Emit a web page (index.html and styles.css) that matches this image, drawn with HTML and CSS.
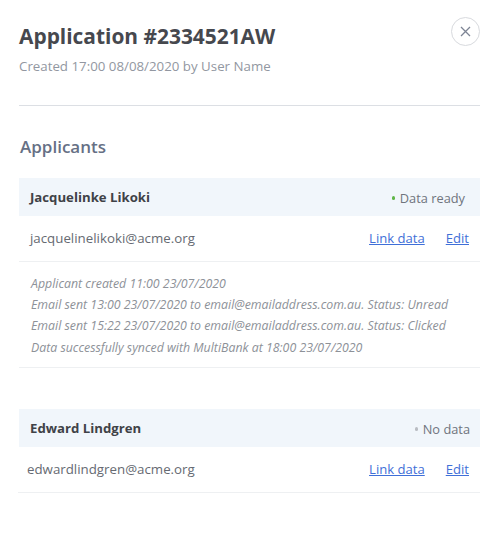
FILE: index.html
```html
<!DOCTYPE html>
<html lang="en">
<head>
<meta charset="utf-8">
<title>Application</title>
<link rel="stylesheet" href="styles.css">
</head>
<body>
<main class="panel">
  <header class="head">
    <div class="head-text">
      <h1 class="title">Application #2334521AW</h1>
      <p class="sub">Created 17:00 08/08/2020 by User Name</p>
    </div>
    <button class="close" aria-label="Close">
      <svg width="11" height="11" viewBox="0 0 11 11"><path d="M1 1 10 10M10 1 1 10" fill="none" stroke="#7d8494" stroke-width="1.3"/></svg>
    </button>
  </header>
  <h2 class="section">Applicants</h2>

  <section class="card">
    <div class="card-head">
      <span class="name">Jacquelinke Likoki</span>
      <span class="status"><i class="dot dot-ready"></i>Data ready</span>
    </div>
    <div class="row">
      <span class="email">jacquelinelikoki@acme.org</span>
      <span class="links"><a href="#">Link data</a><a href="#">Edit</a></span>
    </div>
    <div class="log">
      <p>Applicant created 11:00 23/07/2020</p>
      <p>Email sent 13:00 23/07/2020 to email@emailaddress.com.au. Status: Unread</p>
      <p>Email sent 15:22 23/07/2020 to email@emailaddress.com.au. Status: Clicked</p>
      <p>Data successfully synced with MultiBank at 18:00 23/07/2020</p>
    </div>
  </section>

  <section class="card card-second">
    <div class="card-head">
      <span class="name">Edward Lindgren</span>
      <span class="status status-none"><i class="dot dot-none"></i>No data</span>
    </div>
    <div class="row row-second">
      <span class="email">edwardlindgren@acme.org</span>
      <span class="links"><a href="#">Link data</a><a href="#">Edit</a></span>
    </div>
  </section>
</main>
</body>
</html>
```
FILE: styles.css
```css
* { box-sizing: border-box; }
html, body { margin: 0; padding: 0; background: #fff; }
body { font-family: "Open Sans", sans-serif; width: 493px; height: 544px; overflow: hidden; }
.panel { padding: 17px 13px 0 19px; }
.head { display: flex; justify-content: space-between; align-items: flex-start; height: 89px; border-bottom: 1px solid #dcdfe4; }
.title { margin: 5px 0 0; font-size: 20.9px; line-height: 29px; font-weight: 700; color: #46484e; }
.sub { margin: 7px 0 0; font-size: 13.3px; line-height: 17px; color: #9297a1; }
.close { width: 29px; height: 29px; padding: 0; border: 1px solid #d8dade; border-radius: 50%; background: #fff; display: flex; align-items: center; justify-content: center; }
.section { margin: 29px 0 0 1px; font-size: 17px; line-height: 23px; font-weight: 600; color: #667085; }
.card { margin-top: 20px; }
.card-second { margin-top: 41px; }
.card-head { display: flex; justify-content: space-between; align-items: center; height: 37.5px; padding: 0 10px 0 11px; background: #f1f6fb; }
.name { font-size: 13.2px; font-weight: 700; color: #3f4247; }
.status { display: flex; align-items: center; font-size: 12.8px; color: #6f747d; padding: 2px 5px 0 0; }
.status-none { padding-right: 0; }
.dot { width: 3.5px; height: 3.5px; border-radius: 50%; margin-right: 4.5px; }
.dot-ready { background: #5fb548; }
.dot-none { background: #b9bcc2; }
.row { display: flex; justify-content: space-between; align-items: center; height: 46px; padding: 0 11px; border-bottom: 1px solid #eef0f2; }
.row-second { padding-left: 9px; margin-left: -1px; }
.email { font-size: 13.3px; color: #666a72; }
.links { display: flex; gap: 21px; font-size: 13.1px; }
.links a { color: #3f6fd8; text-decoration: underline; }
.log { padding: 11.5px 11px 9.5px 12px; border-bottom: 1px solid #eef0f2; }
.log p { margin: 0; font-size: 12.33px; line-height: 21.2px; font-style: italic; color: #8d9198; }
```
